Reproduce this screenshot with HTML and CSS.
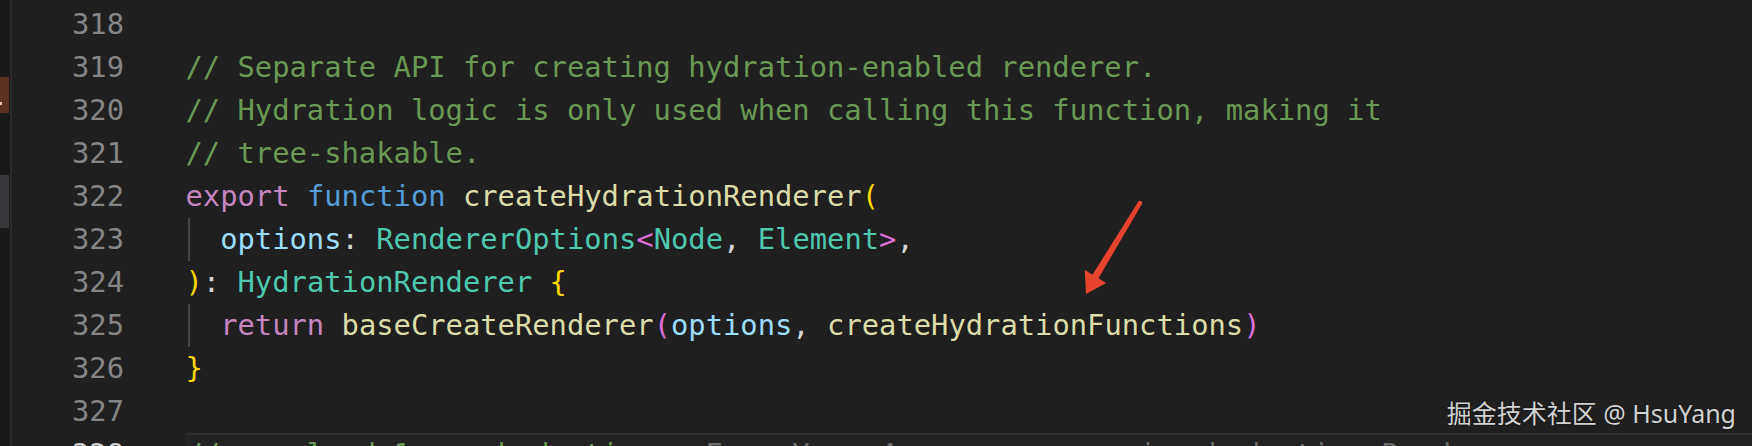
FILE: index.html
```html
<!DOCTYPE html>
<html>
<head>
<meta charset="utf-8">
<link rel="stylesheet" href="styles.css">
</head>
<body>
<div class="window">
  <div class="activity">
    <div class="mark brown"><span class="dot"></span></div>
    <div class="mark grey"></div>
  </div>
  <div class="editor">
    <div class="row"><span class="ln">318</span><span class="src"></span></div>
    <div class="row"><span class="ln">319</span><span class="src"><span class="c">// Separate API for creating hydration-enabled renderer.</span></span></div>
    <div class="row"><span class="ln">320</span><span class="src"><span class="c">// Hydration logic is only used when calling this function, making it</span></span></div>
    <div class="row"><span class="ln">321</span><span class="src"><span class="c">// tree-shakable.</span></span></div>
    <div class="row"><span class="ln">322</span><span class="src"><span class="kw">export</span> <span class="st">function</span> <span class="fn">createHydrationRenderer</span><span class="b1">(</span></span></div>
    <div class="row"><span class="ln">323</span><span class="src guide">  <span class="var">options</span><span class="p">:</span> <span class="ty">RendererOptions</span><span class="b2">&lt;</span><span class="ty">Node</span><span class="p">,</span> <span class="ty">Element</span><span class="b2">&gt;</span><span class="p">,</span></span></div>
    <div class="row"><span class="ln">324</span><span class="src"><span class="b1">)</span><span class="p">:</span> <span class="ty">HydrationRenderer</span> <span class="b1">{</span></span></div>
    <div class="row"><span class="ln">325</span><span class="src guide">  <span class="kw">return</span> <span class="fn">baseCreateRenderer</span><span class="b2">(</span><span class="var">options</span><span class="p">,</span> <span class="fn">createHydrationFunctions</span><span class="b2">)</span></span></div>
    <div class="row"><span class="ln">326</span><span class="src"><span class="b1">}</span></span></div>
    <div class="row"><span class="ln">327</span><span class="src"></span></div>
    <div class="row"><span class="ln current-ln">328</span><span class="src current"><span class="c">// overload 1: no hydration</span><span class="blame">   Evan You, 4 years ago • wip: hydration Renderer</span></span></div>
  </div>
  <svg class="arrow" width="1752" height="446" viewBox="0 0 1752 446">
    <polygon fill="#e8432d" points="1141.9,204.1 1098.5,278.3 1106.2,283 1086,294 1084.8,270 1092.5,274.7 1138.1,201.9"/>
    <circle cx="1140" cy="203" r="2.2" fill="#e8432d"/>
  </svg>
  <div class="watermark">掘金技术社区 @ HsuYang</div>
</div>
</body>
</html>
```

FILE: styles.css
```css
html, body {
  margin: 0;
  padding: 0;
  background: #1f1f1f;
}

.window {
  position: relative;
  width: 1752px;
  height: 446px;
  overflow: hidden;
  display: flex;
  background: #1f1f1f;
}

.activity {
  width: 10px;
  flex: none;
  background: #191919;
  border-right: 2px solid #2a2a2a;
  display: flex;
  flex-direction: column;
  padding-top: 77px;
  box-sizing: content-box;
}

.mark {
  width: 9px;
}

.mark.brown {
  height: 36px;
  background: #5c3121;
  display: flex;
  align-items: flex-end;
  padding-bottom: 8px;
  box-sizing: border-box;
}

.dot {
  width: 2px;
  height: 3px;
  background: #e8c8b0;
}

.mark.grey {
  margin-top: 62px;
  height: 53px;
  background: #38383c;
}

.editor {
  flex: 1;
  display: flex;
  flex-direction: column;
  padding-top: 2.5px;
  font-family: "DejaVu Sans Mono", monospace;
  font-size: 28.8px;
  line-height: 43.1px;
  color: #d4d4d4;
}

.row {
  display: flex;
  height: 43.1px;
  flex: none;
}

.ln {
  width: 112px;
  flex: none;
  text-align: right;
  color: #858585;
  margin-right: 61.5px;
}

.ln.current-ln {
  color: #cccccc;
}

.src {
  flex: 1;
  white-space: pre;
}

.src.guide {
  background: linear-gradient(#454545, #454545) no-repeat 2px 0 / 2px 100%;
}

.src.current {
  background: #222222;
  box-shadow: inset 0 2px 0 #2e2e2e;
}

.c { color: #6a9955; }
.kw { color: #c586c0; }
.st { color: #569cd6; }
.fn { color: #dcdcaa; }
.var { color: #9cdcfe; }
.ty { color: #4ec9b0; }
.p { color: #d4d4d4; }
.b1 { color: #ffd700; }
.b2 { color: #da70d6; }
.blame { color: #6b6b6b; }

.arrow {
  position: absolute;
  left: 0;
  top: 0;
  pointer-events: none;
}

.watermark {
  position: absolute;
  right: 16px;
  top: 396px;
  font-family: "Noto Sans", "Noto Sans CJK SC", sans-serif;
  font-size: 25px;
  line-height: 34px;
  color: #d2d2d2;
  text-shadow: 0 0 2px rgba(0, 0, 0, 0.7);
  white-space: nowrap;
}
```
